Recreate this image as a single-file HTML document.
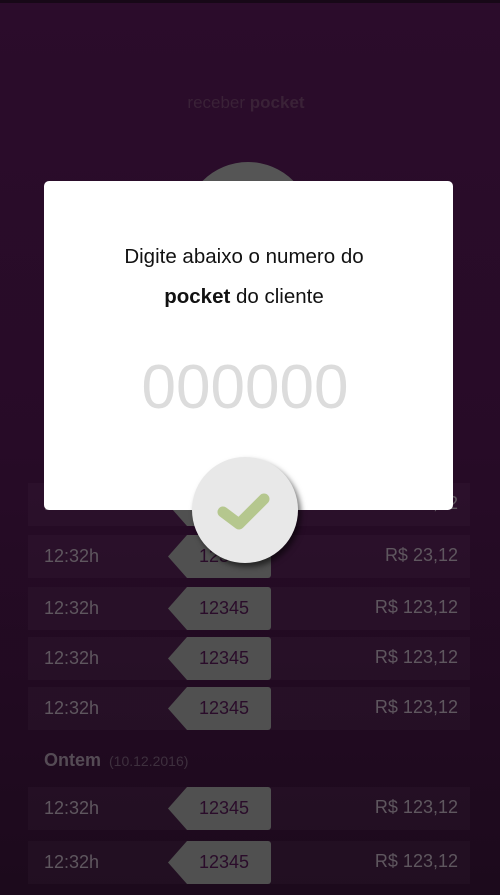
<!DOCTYPE html>
<html><head><meta charset="utf-8"><style>
*{margin:0;padding:0;box-sizing:border-box}
body{width:500px;height:895px;overflow:hidden;font-family:"Liberation Sans",sans-serif;background:linear-gradient(#2b0c2b 0%,#270b27 50%,#1c0a1c 100%);position:relative}
.top{position:absolute;left:0;top:0;width:500px;height:3px;background:#170817}
.title{position:absolute;top:93px;width:500px;text-align:center;font-size:17px;color:#3a2237;left:-4px}
.bgc{position:absolute;left:184px;top:162px;width:128px;height:128px;border-radius:50%;background:#555}
.row{position:absolute;left:28px;width:442px;height:43px;background:rgba(255,255,255,0.025)}
.row .t{position:absolute;left:16px;top:11px;font-size:18px;color:#5f575f}
.row .a{position:absolute;right:12px;top:10px;font-size:18px;color:#5f575f}
.tag{position:absolute;left:140px;top:0;width:103px;height:43px;background:#505050;clip-path:polygon(19px 0,100% 0,100% 100%,19px 100%,0 50%);border-radius:0 3px 3px 0}
.tag span{position:absolute;left:31px;top:11px;font-size:18px;color:#2a0c2a}
.ontem{position:absolute;left:44px;top:750px;font-size:18px;font-weight:bold;color:#554b55}
.ontem span{font-weight:normal;font-size:14px;color:#3e303e;margin-left:8px}
.modal{position:absolute;left:44px;top:181px;width:409px;height:329px;background:#fff;border-radius:5px}
.l1{position:absolute;top:245px;width:500px;text-align:center;font-size:20.5px;color:#111;left:-6px}
.l2{position:absolute;top:285px;width:500px;text-align:center;font-size:20.5px;color:#111;left:-6px}
.zeros{position:absolute;top:352px;left:0;width:490px;text-align:center;font-size:62px;color:#dcdcdc}
.btn{position:absolute;left:192px;top:457px;width:106px;height:106px;border-radius:50%;background:#e8e8e8;box-shadow:3px 4px 6px rgba(0,0,0,.55)}
</style></head><body>
<div class="top"></div>
<div class="title">receber <b>pocket</b></div>
<div class="bgc"></div>
<div class="row" style="top:483px"><div class="t">12:32h</div><div class="tag"><span>12345</span></div><div class="a">R$ 123,12</div></div>
<div class="row" style="top:535px"><div class="t">12:32h</div><div class="tag"><span>12345</span></div><div class="a">R$ 23,12</div></div>
<div class="row" style="top:587px"><div class="t">12:32h</div><div class="tag"><span>12345</span></div><div class="a">R$ 123,12</div></div>
<div class="row" style="top:637px"><div class="t">12:32h</div><div class="tag"><span>12345</span></div><div class="a">R$ 123,12</div></div>
<div class="row" style="top:687px"><div class="t">12:32h</div><div class="tag"><span>12345</span></div><div class="a">R$ 123,12</div></div>
<div class="ontem">Ontem<span>(10.12.2016)</span></div>
<div class="row" style="top:787px"><div class="t">12:32h</div><div class="tag"><span>12345</span></div><div class="a">R$ 123,12</div></div>
<div class="row" style="top:841px"><div class="t">12:32h</div><div class="tag"><span>12345</span></div><div class="a">R$ 123,12</div></div>
<div class="modal"></div>
<div class="l1">Digite abaixo o numero do</div>
<div class="l2"><b>pocket</b> do cliente</div>
<div class="zeros">000000</div>
<div class="btn"><svg width="106" height="106" viewBox="0 0 106 106"><path d="M31 55 L47 67 L72 42" fill="none" stroke="#b5c78e" stroke-width="11" stroke-linecap="round" stroke-linejoin="round"/></svg></div>
</body></html>
